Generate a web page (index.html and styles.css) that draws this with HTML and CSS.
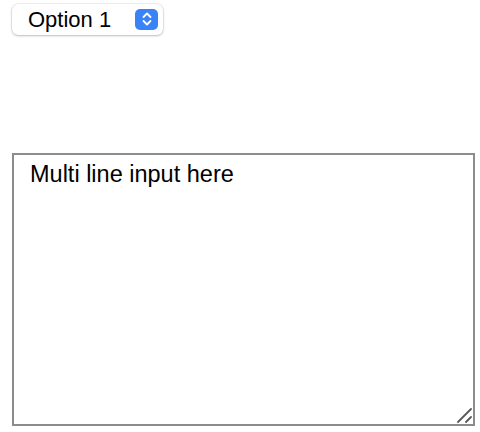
FILE: index.html
```html
<!DOCTYPE html>
<html>
<head>
<meta charset="utf-8">
<link rel="stylesheet" href="styles.css">
</head>
<body>
<div class="page">
  <div class="select">
    <span class="select-label">Option 1</span>
    <span class="select-btn">
      <svg width="12" height="16" viewBox="0 0 12 16">
        <path d="M2.5 6 L6 2.5 L9.5 6" fill="none" stroke="#fff" stroke-width="1.8" stroke-linecap="round" stroke-linejoin="round"/>
        <path d="M2.5 10 L6 13.5 L9.5 10" fill="none" stroke="#fff" stroke-width="1.8" stroke-linecap="round" stroke-linejoin="round"/>
      </svg>
    </span>
  </div>
  <div class="area-wrap">
    <textarea class="area">Multi line input here</textarea>
    <svg class="grip" width="16" height="16" viewBox="0 0 16 16">
      <path d="M2 15 L15 2" stroke="#5a5a5a" stroke-width="1.8" stroke-linecap="round"/>
      <path d="M10 15 L15 10" stroke="#5a5a5a" stroke-width="1.8" stroke-linecap="round"/>
    </svg>
  </div>
</div>
</body>
</html>
```
FILE: styles.css
```css
html, body {
  margin: 0;
  padding: 0;
  background: #fff;
}
.page {
  display: flex;
  flex-direction: column;
  align-items: flex-start;
  padding: 4px 0 0 12px;
  font-family: "Liberation Sans", Arial, sans-serif;
}
.select {
  box-sizing: border-box;
  width: 151px;
  height: 31px;
  display: flex;
  align-items: center;
  justify-content: space-between;
  padding: 0 5px 0 16px;
  border-radius: 6px;
  background: #fff;
  box-shadow: 0 0 0 0.5px rgba(0,0,0,0.12), 0 1px 2.5px rgba(0,0,0,0.22);
}
.select-label {
  font-size: 22px;
  color: #000;
  line-height: 1;
  padding-top: 1px;
}
.select-btn {
  width: 23px;
  height: 21px;
  border-radius: 5px;
  background: #3a83f7;
  display: flex;
  align-items: center;
  justify-content: center;
  margin-top: -1px;
}
.area-wrap {
  position: relative;
  margin-top: 118px;
  display: flex;
}
.area {
  box-sizing: border-box;
  margin: 0;
  width: 463px;
  height: 273px;
  border: 2px solid #8c8c8c;
  border-radius: 0;
  padding: 5px 16px;
  font-family: "Liberation Sans", Arial, sans-serif;
  font-size: 23.5px;
  line-height: 28px;
  color: #000;
  background: #fff;
  outline: none;
  resize: none;
}
.grip {
  position: absolute;
  right: 3px;
  bottom: 3px;
}
```
